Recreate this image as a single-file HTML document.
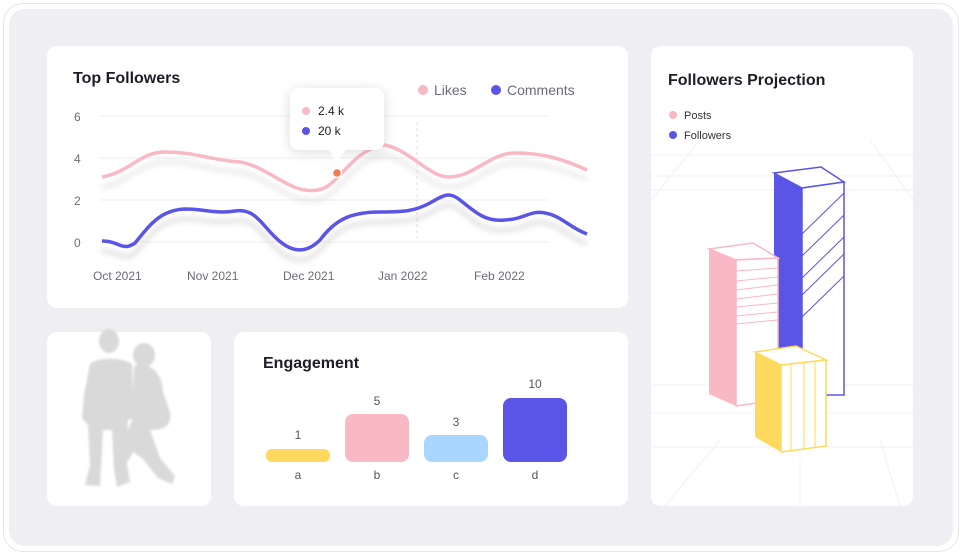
<!DOCTYPE html>
<html><head><meta charset="utf-8"><style>
*{margin:0;padding:0;box-sizing:border-box}
body{width:962px;height:555px;background:#fff;font-family:"Liberation Sans",sans-serif;position:relative;overflow:hidden}
.outer{position:absolute;left:3px;top:3px;width:956px;height:549px;border:1px solid #e6e6ea;border-radius:20px;background:#fff}
.panel{position:absolute;left:9px;top:9px;width:944px;height:537px;border-radius:16px;background:#efeef3}
.card{position:absolute;background:#fff;border-radius:10px}
.t{position:absolute;font-weight:bold;color:#1d1d27;font-size:16px}
</style></head><body>
<div class="outer"></div><div class="panel"></div>
<div class="card" style="left:47px;top:46px;width:581px;height:262px"></div>
<div class="card" style="left:47px;top:332px;width:164px;height:174px"></div>
<div class="card" style="left:234px;top:332px;width:394px;height:174px"></div>
<div class="card" style="left:651px;top:46px;width:262px;height:460px;overflow:hidden"></div>

<svg width="962" height="555" style="position:absolute;left:0;top:0" font-family="Liberation Sans, sans-serif">
<defs><filter id="sh" x="-20%" y="-50%" width="140%" height="200%"><feGaussianBlur stdDeviation="3"/></filter>
<filter id="sh2" x="-30%" y="-30%" width="160%" height="160%"><feGaussianBlur stdDeviation="6"/></filter>
<filter id="bl" x="-10%" y="-10%" width="120%" height="120%"><feGaussianBlur stdDeviation="1"/></filter>
<clipPath id="pc"><rect x="651" y="46" width="262" height="460" rx="10"/></clipPath></defs>
<g stroke="#eeeef2" stroke-width="1">
<line x1="100" y1="116" x2="548" y2="116"/><line x1="100" y1="158" x2="548" y2="158"/>
<line x1="100" y1="200" x2="548" y2="200"/><line x1="100" y1="242" x2="548" y2="242"/></g>
<line x1="417" y1="122" x2="417" y2="242" stroke="#ddd" stroke-dasharray="3,3"/>
<g font-size="12" fill="#6b6b78"><text x="74" y="121">6</text><text x="74" y="163">4</text><text x="74" y="205">2</text><text x="74" y="247">0</text>
<text x="93" y="280">Oct 2021</text><text x="187" y="280">Nov 2021</text><text x="283" y="280">Dec 2021</text><text x="378" y="280">Jan 2022</text><text x="474" y="280">Feb 2022</text></g>
<path d="M102,177 C130,172 140,152 165,152 C195,152 210,160 240,162 C270,167 290,195 318,190 C340,186 350,150 385,145 C410,150 430,178 450,177 C475,176 490,153 515,153 C545,153 565,160 587,170" fill="none" stroke="#ccc" stroke-width="4" filter="url(#sh)" transform="translate(0,10)" opacity=".45"/>
<path d="M102,241 C120,241 122,252 135,243 C150,225 160,210 185,209 C205,209 215,214 235,211 C255,208 262,225 275,237 C290,252 305,255 320,240 C335,220 350,212 380,212 C405,212 415,211 430,203 C445,194 450,192 460,200 C475,212 485,222 505,220 C525,219 530,210 545,213 C562,216 570,228 587,234" fill="none" stroke="#bbb" stroke-width="4" filter="url(#sh)" transform="translate(0,10)" opacity=".5"/>
<path d="M102,177 C130,172 140,152 165,152 C195,152 210,160 240,162 C270,167 290,195 318,190 C340,186 350,150 385,145 C410,150 430,178 450,177 C475,176 490,153 515,153 C545,153 565,160 587,170" fill="none" stroke="#f8b8c4" stroke-width="3.5"/>
<path d="M102,241 C120,241 122,252 135,243 C150,225 160,210 185,209 C205,209 215,214 235,211 C255,208 262,225 275,237 C290,252 305,255 320,240 C335,220 350,212 380,212 C405,212 415,211 430,203 C445,194 450,192 460,200 C475,212 485,222 505,220 C525,219 530,210 545,213 C562,216 570,228 587,234" fill="none" stroke="#5a55e6" stroke-width="3.5"/>
<g filter="url(#sh2)" opacity=".35"><rect x="290" y="90" width="94" height="62" rx="8" fill="#999"/></g>
<rect x="290" y="88" width="94" height="62" rx="8" fill="#fff"/>
<path d="M328,149 L337,163 L346,149Z" fill="#fff"/>
<circle cx="337" cy="173" r="4.5" fill="#f47a5c" stroke="#fff" stroke-width="1.5"/>
<circle cx="306" cy="111" r="4" fill="#f8b8c4"/><text x="318" y="115" font-size="12" fill="#222">2.4 k</text>
<circle cx="306" cy="131" r="4" fill="#5a55e6"/><text x="318" y="135" font-size="12" fill="#222">20 k</text>
<circle cx="423" cy="90" r="5" fill="#f8b8c4"/><text x="434" y="95" font-size="14" fill="#6b6b78">Likes</text>
<circle cx="496" cy="90" r="5" fill="#5a55e6"/><text x="507" y="95" font-size="14" fill="#6b6b78">Comments</text>

<g fill="#d9d9d9" filter="url(#bl)">
<ellipse cx="109" cy="341" rx="10" ry="12"/>
<path d="M90,364 C98,357 122,357 132,364 L134,418 L128,420 L127,465 L130,482 L117,487 L114,470 L112,430 L103,430 L101,468 L100,486 L85,485 L90,465 L88,425 L82,418 L84,395 Z"/>
<ellipse cx="144" cy="355" rx="11" ry="12"/>
<path d="M134,366 C148,362 162,370 163,392 L170,412 C172,425 165,430 150,430 L160,458 L175,476 L172,484 L158,478 L142,458 L133,452 L128,462 L124,440 L132,420 Z"/>
</g>

<text x="263" y="368" font-size="16" font-weight="bold" fill="#1d1d27">Engagement</text>
<rect x="266" y="449" width="64" height="13" rx="6" fill="#fed95e"/>
<rect x="345" y="414" width="64" height="48" rx="8" fill="#f8b8c4"/>
<rect x="424" y="435" width="64" height="27" rx="8" fill="#a9d6ff"/>
<rect x="503" y="398" width="64" height="64" rx="8" fill="#5a55e6"/>
<g font-size="12" fill="#555" text-anchor="middle"><text x="298" y="439">1</text><text x="377" y="405">5</text><text x="456" y="426">3</text><text x="535" y="388">10</text>
<text x="298" y="479">a</text><text x="377" y="479">b</text><text x="456" y="479">c</text><text x="535" y="479">d</text></g>

<text x="668" y="85" font-size="16" font-weight="bold" fill="#1d1d27">Followers Projection</text>
<circle cx="673" cy="115" r="4" fill="#f8b8c4"/><text x="684" y="119" font-size="11" fill="#333">Posts</text>
<circle cx="673" cy="135" r="4" fill="#5a55e6"/><text x="684" y="139" font-size="11" fill="#333">Followers</text>
<g stroke="#f1f1f4" stroke-width="1" fill="none" clip-path="url(#pc)">
<line x1="651" y1="155" x2="913" y2="155"/><line x1="651" y1="176" x2="913" y2="176"/><line x1="651" y1="190" x2="913" y2="190"/>
<line x1="651" y1="385" x2="913" y2="385"/><line x1="651" y1="413" x2="913" y2="413"/><line x1="651" y1="447" x2="913" y2="447"/>
<line x1="700" y1="140" x2="651" y2="200"/><line x1="870" y1="140" x2="913" y2="200"/>
<line x1="720" y1="440" x2="665" y2="506"/><line x1="880" y1="440" x2="900" y2="506"/><line x1="800" y1="460" x2="800" y2="506"/>
</g>
<path d="M774,173 L821,167 L844,182 L802,188 Z" fill="#fff" stroke="#5a55e6" stroke-width="1.5"/>
<path d="M774,173 L802,188 L802,395 L774,380 Z" fill="#5a55e6"/>
<path d="M802,188 L844,182 L844,395 L802,395 Z" fill="#fff" stroke="#5a55e6" stroke-width="1.5"/>
<g stroke="#5a55e6" stroke-width="1"><line x1="802" y1="234" x2="844" y2="193"/><line x1="802" y1="256" x2="844" y2="215"/><line x1="802" y1="278" x2="844" y2="237"/><line x1="802" y1="295" x2="844" y2="254"/><line x1="802" y1="317" x2="844" y2="276"/></g>
<path d="M709,249 L753,243 L778,258 L736,260 Z" fill="#fff" stroke="#f8b8c4" stroke-width="1.5"/>
<path d="M709,249 L736,260 L736,406 L709,394 Z" fill="#f8b8c4"/>
<path d="M736,260 L778,258 L778,400 L736,406 Z" fill="#fff" stroke="#f8b8c4" stroke-width="1.5"/>
<g stroke="#f8b8c4" stroke-width="1"><line x1="736" y1="271" x2="778" y2="268"/><line x1="736" y1="281" x2="778" y2="277"/><line x1="736" y1="290" x2="778" y2="285"/><line x1="736" y1="299" x2="778" y2="294"/><line x1="736" y1="307" x2="778" y2="303"/><line x1="736" y1="316" x2="778" y2="312"/><line x1="736" y1="324" x2="778" y2="320"/></g>
<path d="M755,352 L796,346 L826,360 L781,365 Z" fill="#fff" stroke="#fed95e" stroke-width="1.5"/>
<path d="M755,352 L781,365 L781,452 L755,437 Z" fill="#fed95e"/>
<path d="M781,365 L826,360 L826,446 L781,452 Z" fill="#fff" stroke="#fed95e" stroke-width="1.5"/>
<g stroke="#fed95e" stroke-width="1"><line x1="791" y1="364" x2="791" y2="451"/><line x1="804" y1="363" x2="804" y2="449"/><line x1="815" y1="361" x2="815" y2="448"/></g>
</svg>
<div class="t" style="left:73px;top:70px">Top Followers</div>
</body></html>
